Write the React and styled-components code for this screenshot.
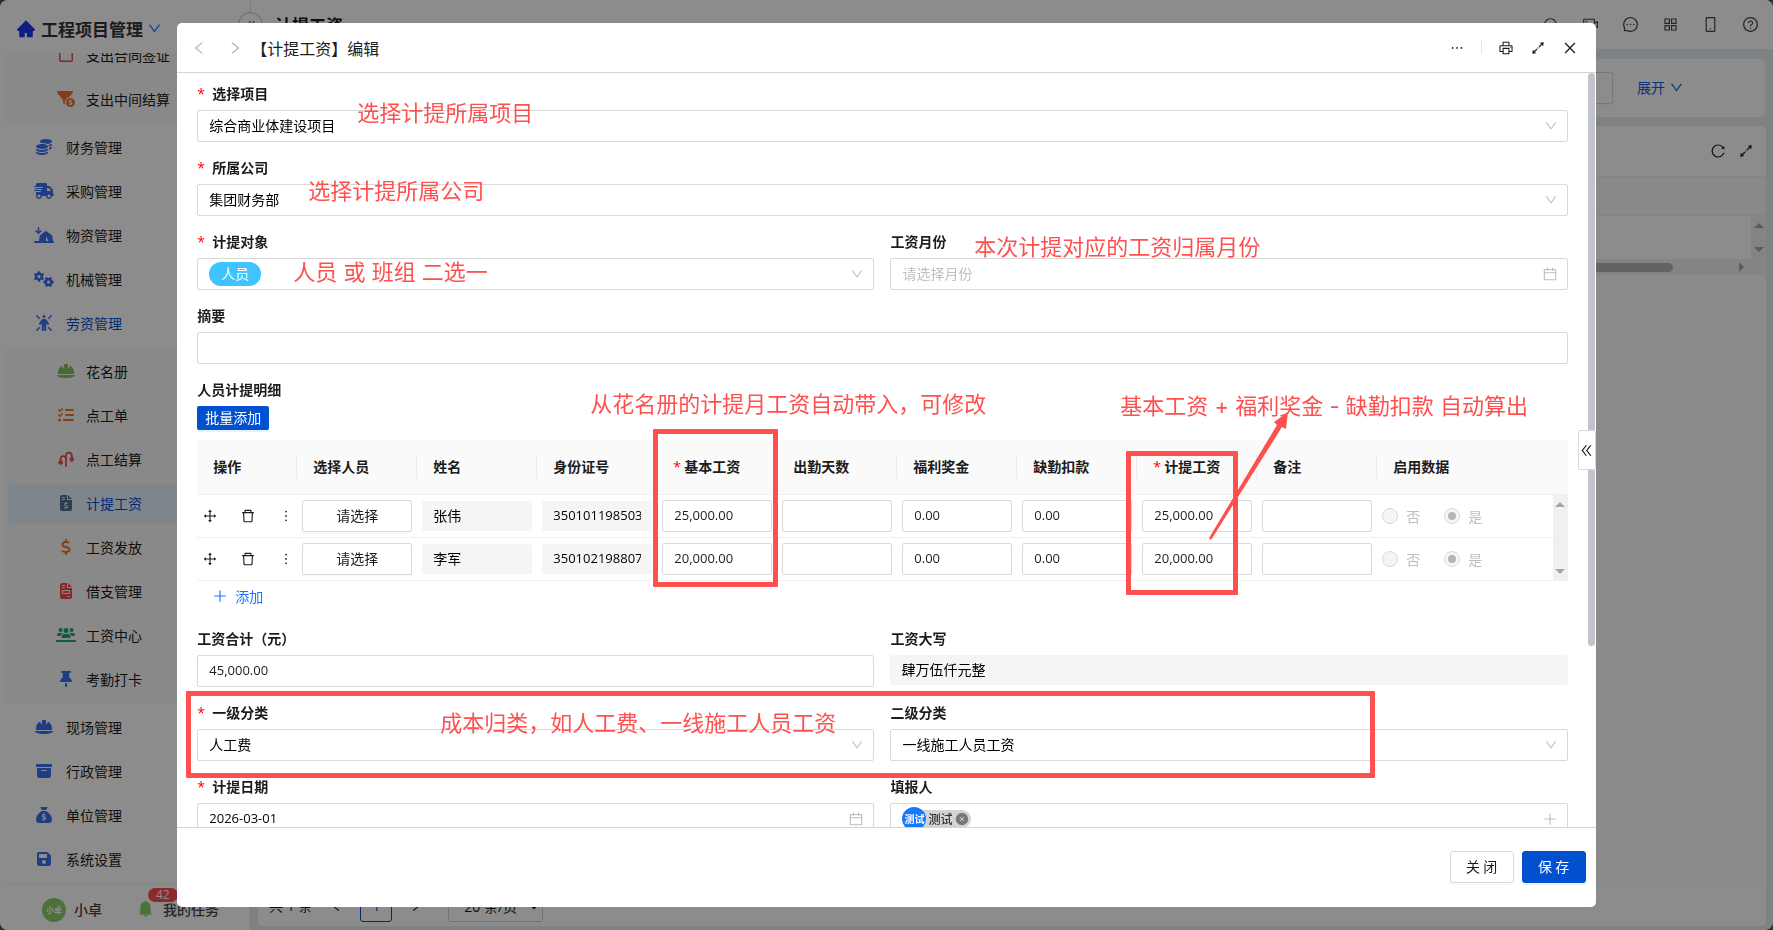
import React from "react";
import styled, { createGlobalStyle, css } from "styled-components";
import {
  AiFillHome, AiOutlineDown, AiOutlineLeft, AiOutlineRight, AiOutlineEllipsis, AiOutlinePrinter,
  AiOutlineClose, AiOutlineReload, AiOutlineCalendar, AiOutlinePlus, AiOutlineDelete, AiOutlineDrag,
  AiOutlineDoubleLeft, AiOutlineMobile, AiOutlineQuestionCircle, AiOutlineAppstore, AiOutlineMessage,
  AiOutlineMore, AiOutlineVideoCamera, AiOutlineSearch, AiOutlineCustomerService, AiFillCloseCircle, AiFillBell,
} from "react-icons/ai";
import {
  FaCoins, FaTruckFast, FaTentArrowDownToLine, FaGears, FaPersonRays, FaHelmetSafety, FaListCheck,
  FaFileInvoiceDollar, FaDollarSign, FaFileInvoice, FaUsersLine, FaThumbtack, FaBoxArchive,
  FaSackDollar, FaFloppyDisk, FaFilterCircleDollar, FaRegSquare,
} from "react-icons/fa6";

const fontStack = '"Noto Sans CJK SC", "Open Sans", sans-serif';
const latinStack = '"Open Sans", "Noto Sans CJK SC", sans-serif';
const mark = "#ff5050";

const GlobalStyle = createGlobalStyle`
  * { box-sizing: border-box; }
  body { margin: 0; background: #555; color: #1c1c1c; font: 14px/22px ${fontStack}; }
  button, input, select { font: inherit; color: inherit; margin: 0; }
  button { cursor: pointer; }
  svg { display: block; flex: none; }
`;

/* ---------- application shell ---------- */

const Shell = styled.div`
  display: grid;
  grid-template-columns: 251px minmax(0, 1fr);
  height: 100vh;
  overflow: hidden;
  border-radius: 8px;
  background: #e8edf2;
`;

const Sidebar = styled.aside`
  display: flex;
  flex-direction: column;
  min-height: 0;
  background: #fff;
  border-right: 1px solid #e2e2e2;
`;

const Brand = styled.div`
  display: flex;
  align-items: center;
  gap: 5px;
  height: 53px;
  padding: 4px 0 0 16px;
  font-size: 17px;
  font-weight: 700;
  color: #333;
  flex: none;
`;

const BrandSearch = styled.button`
  margin-left: 46px;
  padding: 0;
  border: 0;
  background: none;
  color: #1677ff;
`;

const Menu = styled.nav`
  flex: 1;
  min-height: 0;
  overflow: hidden;
  display: flex;
  flex-direction: column;
  justify-content: flex-end;
  gap: 4px;
  padding: 0 4px 4px;
`;

const SubMenu = styled.div`
  flex: none;
  display: flex;
  flex-direction: column;
  gap: 4px;
  padding: 4px;
  background: #fafafa;
`;

const MenuLink = styled.a`
  flex: none;
  display: flex;
  align-items: center;
  gap: ${(p) => (p.$sub ? 10 : 12)}px;
  height: 40px;
  padding: 0 0 2px ${(p) => (p.$sub ? 48 : 30)}px;
  border-radius: 4px;
  color: ${(p) => (p.$active ? "#0050d0" : "#1c1c1c")};
  background: ${(p) => (p.$selected ? "#e6f4ff" : "transparent")};
  text-decoration: none;
  white-space: nowrap;
`;

const IconSlot = styled.span`
  width: 20px;
  color: ${(p) => p.$color};
  svg { width: 20px; height: 16px; }
`;

const UserBar = styled.div`
  position: relative;
  flex: none;
  display: flex;
  align-items: center;
  height: 46px;
  margin-left: 4px;
  padding: 4px 0 0 38px;
  border-top: 1px solid #eee;
  color: #444;
  font-weight: 500;
`;

const Avatar = styled.span`
  display: grid;
  place-items: center;
  flex: none;
  width: 24px;
  height: 24px;
  border-radius: 50%;
  background: ${(p) => p.$color};
  color: #fff;
  font-size: ${(p) => p.$size}px;
  font-weight: 700;
  line-height: 1;
  white-space: nowrap;
`;

const UserName = styled.span`
  margin: 0 34px 0 8px;
  padding-bottom: 2px;
`;

const Tasks = styled.a`
  display: flex;
  align-items: center;
  gap: 8px;
  padding-bottom: 2px;
  color: inherit;
  text-decoration: none;
  svg { color: #87d068; }
`;

const Badge = styled.span`
  position: absolute;
  left: 144px;
  top: 3px;
  padding: 0 8px;
  border-radius: 8px;
  background: #ff4d4f;
  color: #fff;
  font: 12px/14px ${latinStack};
`;

const Main = styled.main`
  position: relative;
  display: flex;
  flex-direction: column;
  min-width: 0;
  min-height: 0;
`;

const CollapseButton = styled.button`
  position: absolute;
  left: -13px;
  top: 12px;
  display: grid;
  place-items: center;
  width: 25px;
  height: 25px;
  padding: 0;
  border: 1px solid #bbb;
  border-radius: 50%;
  background: #fff;
  color: #444;
`;

const TopBar = styled.header`
  flex: none;
  display: flex;
  align-items: center;
  justify-content: space-between;
  height: 49px;
  padding: 0 14px 0 24px;
  background: #fff;
`;

const PageTitle = styled.h1`
  margin: 0;
  font-size: 17px;
  line-height: 24px;
`;

const TopTools = styled.div`
  display: flex;
  gap: 23px;
  color: #444;
`;

const PlainButton = styled.button`
  display: grid;
  place-items: center;
  min-width: 16px;
  min-height: 16px;
  padding: 0;
  border: 0;
  background: none;
  color: inherit;
`;

const FilterCard = styled.section`
  flex: none;
  display: flex;
  align-items: center;
  justify-content: flex-end;
  gap: 24px;
  height: 58px;
  margin: 10px 8px 9px 7px;
  padding-right: 81px;
  border-radius: 4px;
  background: #fff;
`;

const ExpandLink = styled.a`
  display: flex;
  align-items: center;
  gap: 4px;
  padding-bottom: 2px;
  color: #0a60ee;
  text-decoration: none;
`;

const ListCard = styled.section`
  flex: 1;
  min-height: 0;
  display: flex;
  flex-direction: column;
  margin: 0 7px 4px;
  border-radius: 4px;
  background: #fff;
`;

const ListTools = styled.div`
  display: flex;
  align-items: center;
  justify-content: flex-end;
  gap: 12px;
  height: 50px;
  padding-right: 12px;
`;

const ListHead = styled.div`
  height: 40px;
  background: #fafafa;
  border-top: 1px solid #efefef;
  border-bottom: 1px solid #efefef;
`;

const ListBody = styled.div`
  display: flex;
  justify-content: flex-end;
  height: 43px;
`;

const ScrollRail = styled.div`
  display: flex;
  flex-direction: column;
  align-items: center;
  justify-content: space-between;
  width: 15px;
  height: 100%;
  padding: 7px 0;
  background: #f0f0f0;
`;

const Arrow = styled.i`
  width: 0;
  height: 0;
  border: 5px solid transparent;
  ${(p) => p.$dir === "up" && css`border-top-width: 0; border-bottom-color: #a6a6a6;`}
  ${(p) => p.$dir === "down" && css`border-bottom-width: 0; border-top-color: #a6a6a6;`}
  ${(p) => p.$dir === "right" && css`border-right-width: 0; border-left-color: #a6a6a6;`}
`;

const HorizontalRail = styled.div`
  display: flex;
  align-items: center;
  justify-content: flex-end;
  gap: 66px;
  height: 16px;
  padding-right: 22px;
  background: #f0f0f0;
`;

const HorizontalThumb = styled.div`
  width: 60%;
  height: 9px;
  border-radius: 5px;
  background: #b4b4b4;
`;

const ListFill = styled.div`
  flex: 1;
  background: #fdfdfd;
`;

const Pagination = styled.div`
  display: flex;
  align-items: center;
  gap: 8px;
  padding: 0 0 4px 11px;
  font-family: ${latinStack};
`;

const PageTotal = styled.span`
  margin-right: 8px;
`;

const PageNumber = styled.button`
  width: 32px;
  height: 32px;
  margin: 0 8px;
  border: 1px solid #0050d0;
  border-radius: 3px;
  background: #fff;
  color: #0050d0;
`;

const PageSize = styled.select`
  width: 95px;
  height: 32px;
  margin-left: 16px;
  padding-left: 11px;
  border: 1px solid #d0d0d0;
  border-radius: 3px;
  background: #fff;
`;

/* ---------- dialog ---------- */

const Mask = styled.div`
  position: fixed;
  inset: 0;
  display: grid;
  place-items: center;
  background: rgba(0, 0, 0, 0.45);
`;

const Dialog = styled.section`
  position: relative;
  display: flex;
  flex-direction: column;
  width: 80vw;
  height: 95vh;
  border-radius: 5px;
  background: #fff;
  overflow: hidden;
`;

const DialogHeader = styled.header`
  flex: none;
  display: flex;
  align-items: center;
  justify-content: space-between;
  height: 50px;
  padding: 0 18px 0 14px;
  border-bottom: 1px solid #d4d4d4;
`;

const HeaderGroup = styled.div`
  display: flex;
  align-items: center;
  gap: ${(p) => p.$gap}px;
`;

const DialogTitle = styled.h2`
  margin: 0 0 0 -12px;
  font-size: 16px;
  font-weight: 400;
  line-height: 24px;
`;

const StepButton = styled(PlainButton)`
  width: 16px;
  color: #b8b8b8;
`;

const Rule = styled.span`
  width: 1px;
  height: 13px;
  background: #e4e4e4;
`;

const DialogBody = styled.div`
  position: relative;
  flex: 1;
  min-height: 0;
  display: flex;
  overflow: hidden;
`;

const Form = styled.form`
  flex: 1;
  min-width: 0;
  display: flex;
  flex-direction: column;
  gap: 14px;
  padding: 9px 20px 0;
  overflow: hidden;
`;

const ScrollTrack = styled.div`
  flex: none;
  width: 8px;
`;

const ScrollThumb = styled.div`
  width: 7px;
  height: 76%;
  border-radius: 4px;
  background: #c1c4cb;
`;

const SideTab = styled.button`
  position: absolute;
  right: 0;
  top: 50%;
  transform: translateY(-50%);
  display: grid;
  place-items: center;
  width: 18px;
  height: 40px;
  padding: 0;
  border: 1px solid #d9d9d9;
  border-radius: 2px;
  background: #fff;
`;

const DialogFooter = styled.footer`
  flex: none;
  display: flex;
  align-items: flex-start;
  justify-content: flex-end;
  gap: 8px;
  height: 80px;
  padding: 23px 10px 0;
  border-top: 1px solid #d4d4d4;
`;

const Button = styled.button`
  width: 64px;
  height: 32px;
  padding: 0 0 2px;
  border: 1px solid ${(p) => (p.$primary ? "#0050d0" : "#d9d9d9")};
  border-radius: 3px;
  background: ${(p) => (p.$primary ? "#0050d0" : "#fff")};
  color: ${(p) => (p.$primary ? "#fff" : "#1c1c1c")};
  box-shadow: 0 2px 0 ${(p) => (p.$primary ? "#e6f4ff" : "#fafafa")};
`;

/* ---------- form fields ---------- */

const Columns = styled.div`
  flex: none;
  display: grid;
  grid-template-columns: repeat(2, minmax(0, 1fr));
  gap: 16px;
`;

const FieldWrap = styled.div`
  flex: none;
  display: flex;
  flex-direction: column;
  gap: 4px;
`;

const Label = styled.label`
  height: 24px;
  line-height: 22px;
  font-weight: 600;
`;

const Star = styled.span`
  display: inline-block;
  width: ${(p) => (p.$tight ? 11 : 15)}px;
  height: 22px;
  vertical-align: top;
  color: #f00;
  font: 400 14px/24px ${latinStack};
`;

const Box = styled.div`
  display: flex;
  align-items: center;
  height: 32px;
  padding: 0 9px 0 11px;
  border: 1px solid #d9d9d9;
  border-radius: 2px;
  background: #fff;
  color: #000;
  > svg { color: #bfbfbf; }
`;

const bareControl = css`
  flex: 1;
  min-width: 0;
  width: 100%;
  padding: 0 0 2px;
  border: 0;
  outline: 0;
  background: none;
  appearance: none;
`;

const BareInput = styled.input`
  ${bareControl}
  &::placeholder { color: #bfbfbf; }
`;

const BareSelect = styled.select`
  ${bareControl}
  opacity: 1;
`;

const PillSelect = styled.select`
  height: 24px;
  padding: 0 12px 2px;
  border: 0;
  border-radius: 12px;
  background: #40c4ff;
  color: #fff;
  appearance: none;
`;

const Spacer = styled.span`
  flex: 1;
`;

const numeric = css`
  font-family: ${latinStack};
  font-size: 13px;
`;

const TextInput = styled.input`
  display: block;
  width: 100%;
  height: 32px;
  padding: 0 11px 2px;
  border: 1px solid #d9d9d9;
  border-radius: 2px;
  background: #fff;
  color: #1c1c1c;
  outline: 0;
  ${(p) => p.$numeric && numeric}
  ${(p) => p.readOnly && css`
    height: 30px;
    padding: 0 10px 2px;
    border-color: #f5f5f5;
    background: #f5f5f5;
    color: #000;
  `}
`;

const DateInput = styled(BareInput)`
  ${numeric}
`;

const Person = styled.span`
  display: flex;
  align-items: center;
  height: 18px;
  padding-right: 2px;
  gap: 2px;
  border-radius: 9px;
  background: #d3d3d3;
  font-size: 12px;
  svg { color: #777; }
`;

/* ---------- detail table ---------- */

const BatchButton = styled.button`
  display: block;
  width: 72px;
  height: 24px;
  margin-bottom: 10px;
  padding: 0 0 2px;
  border: 0;
  border-radius: 2px;
  background: #0050d0;
  color: #fff;
  box-shadow: 0 2px 0 #e6f4ff;
`;

const Table = styled.table`
  width: 100%;
  table-layout: fixed;
  border-collapse: separate;
  border-spacing: 0;
`;

const Th = styled.th`
  position: relative;
  height: 55px;
  padding: 0 0 2px 16px;
  border-bottom: 1px solid #f0f0f0;
  background: #fafafa;
  font-weight: 600;
  text-align: left;
  white-space: nowrap;
  ${(p) => p.$split && css`
    &::after {
      content: "";
      position: absolute;
      right: 0;
      top: 15px;
      width: 1px;
      height: 24px;
      background: #ececec;
    }
  `}
`;

const Td = styled.td`
  height: 43px;
  padding: 0 5px;
  border-bottom: 1px solid #f0f0f0;
`;

const RailCell = styled.td`
  padding: 0;
  height: 86px;
`;

const RowTools = styled.div`
  display: flex;
  align-items: center;
  gap: 22px;
  color: #1c1c1c;
`;

const PickButton = styled.button`
  display: block;
  width: 100%;
  height: 32px;
  padding: 0 0 2px;
  border: 1px solid #d9d9d9;
  border-radius: 2px;
  background: #fff;
  box-shadow: 0 2px 0 #fafafa;
`;

const Radios = styled.div`
  display: flex;
  gap: 24px;
`;

const RadioLabel = styled.label`
  display: flex;
  align-items: center;
  gap: 8px;
  color: #bfbfbf;
`;

const Radio = styled.input`
  appearance: none;
  display: grid;
  place-items: center;
  width: 16px;
  height: 16px;
  border: 1px solid #d9d9d9;
  border-radius: 50%;
  background: #f5f5f5;
  &:checked::after {
    content: "";
    width: 8px;
    height: 8px;
    border-radius: 50%;
    background: #b5b5b5;
  }
`;

const AddRow = styled.button`
  display: flex;
  align-items: center;
  gap: 7px;
  height: 32px;
  padding: 0 15px 2px;
  border: 0;
  background: none;
  color: #1677ff;
`;

/* ---------- review notes drawn over the form ---------- */

const Notes = styled.div`
  position: absolute;
  inset: 0;
  pointer-events: none;
`;

const Note = styled.span`
  position: absolute;
  left: ${(p) => p.$x}px;
  top: ${(p) => p.$y}px;
  color: ${mark};
  font: 400 22px/32px Inter, "Noto Sans CJK SC", sans-serif;
  white-space: nowrap;
`;

const Frame = styled.span`
  position: absolute;
  left: ${(p) => p.$x}px;
  top: ${(p) => p.$y}px;
  width: ${(p) => p.$w}px;
  height: ${(p) => p.$h}px;
  border: 5px solid ${mark};
  border-radius: 1px;
`;

const NoteArrow = styled.svg`
  position: absolute;
  left: 1026px;
  top: 336px;
`;

/* ---------- parts ---------- */

const ExpandIcon = ({ size = 12 }) => (
  <svg width={size} height={size} viewBox="0 0 12 12" fill="none" stroke="currentColor">
    <path d="M2.500 9.500 5 7M5.700 6.300 6.300 5.700M7 5 9.500 2.500" strokeWidth="1.200" />
    <path d="M8.200 1 11.500.5 11 3.800ZM1 8.200 3.800 11 .5 11.500Z" fill="currentColor" strokeWidth=".4" />
  </svg>
);

const SettleIcon = () => (
  <svg viewBox="0 0 18 18" fill="none" stroke="currentColor" strokeWidth="2" strokeLinecap="round">
    <path d="M9 17V5a3.200 3.200 0 0 1 6.500 0v3" />
    <path d="M8.500 8a2.800 2.800 0 0 0-5.500 0v3" />
    <path d="M15.500 6.500 17.500 9.500 15.500 11.500 13.500 9.500ZM3 10 5 13 3 15 1 13Z" fill="currentColor" strokeWidth="1.500" />
  </svg>
);

const blue = "#3a6ff0";
const menu = [
  { children: [
    { text: "支出合同签证", icon: FaRegSquare, color: "#f5494d" },
    { text: "支出中间结算", icon: FaFilterCircleDollar, color: "#ee7331" },
  ] },
  { text: "财务管理", icon: FaCoins },
  { text: "采购管理", icon: FaTruckFast },
  { text: "物资管理", icon: FaTentArrowDownToLine },
  { text: "机械管理", icon: FaGears },
  { text: "劳资管理", icon: FaPersonRays, active: true },
  { children: [
    { text: "花名册", icon: FaHelmetSafety, color: "#87c068" },
    { text: "点工单", icon: FaListCheck, color: "#ee7331" },
    { text: "点工结算", icon: SettleIcon, color: "#ee4d50" },
    { text: "计提工资", icon: FaFileInvoiceDollar, color: "#56708f", active: true, selected: true },
    { text: "工资发放", icon: FaDollarSign, color: "#ee7331" },
    { text: "借支管理", icon: FaFileInvoice, color: "#ee4d50" },
    { text: "工资中心", icon: FaUsersLine, color: "#20a080" },
    { text: "考勤打卡", icon: FaThumbtack, color: blue },
  ] },
  { text: "现场管理", icon: FaHelmetSafety },
  { text: "行政管理", icon: FaBoxArchive },
  { text: "单位管理", icon: FaSackDollar },
  { text: "系统设置", icon: FaFloppyDisk },
];

function MenuItem({ item, sub }) {
  const Icon = item.icon;
  return (
    <MenuLink href="#" $sub={sub} $active={item.active} $selected={item.selected}>
      <IconSlot $color={item.color || blue}><Icon /></IconSlot>
      {item.text}
    </MenuLink>
  );
}

function Field({ id, label, required, children }) {
  return (
    <FieldWrap>
      <Label htmlFor={id}>{required && <Star>*</Star>}{label}</Label>
      {children}
    </FieldWrap>
  );
}

function SelectField({ id, label, required, value }) {
  return (
    <Field id={id} label={label} required={required}>
      <Box>
        <BareSelect id={id} defaultValue={value}><option>{value}</option></BareSelect>
        <AiOutlineDown size={14} />
      </Box>
    </Field>
  );
}

const headers = ["操作", "选择人员", "姓名", "身份证号", "*基本工资", "出勤天数", "福利奖金", "缺勤扣款", "*计提工资", "备注"];
const rows = [
  { name: "张伟", id: "350101198503", base: "25,000.00", total: "25,000.00" },
  { name: "李军", id: "350102198807", base: "20,000.00", total: "20,000.00" },
];

function DetailTable() {
  return (
    <Table>
      <colgroup>
        <col width="100" />
        {headers.slice(1).map((h) => <col key={h} width="120" />)}
        <col />
        <col width="15" />
      </colgroup>
      <thead>
        <tr>
          {headers.map((h) => (
            <Th key={h} $split>
              {h[0] === "*" ? <><Star $tight>*</Star>{h.slice(1)}</> : h}
            </Th>
          ))}
          <Th colSpan={2}>启用数据</Th>
        </tr>
      </thead>
      <tbody>
        {rows.map((r, i) => (
          <tr key={r.id}>
            <Td>
              <RowTools>
                <PlainButton type="button" aria-label="移动"><AiOutlineDrag size={16} /></PlainButton>
                <PlainButton type="button" aria-label="删除"><AiOutlineDelete size={16} /></PlainButton>
                <PlainButton type="button" aria-label="更多"><AiOutlineMore size={16} /></PlainButton>
              </RowTools>
            </Td>
            <Td><PickButton type="button">请选择</PickButton></Td>
            <Td><TextInput aria-label="姓名" readOnly value={r.name} /></Td>
            <Td><TextInput aria-label="身份证号" readOnly $numeric value={r.id} /></Td>
            <Td><TextInput aria-label="基本工资" $numeric defaultValue={r.base} /></Td>
            <Td><TextInput aria-label="出勤天数" $numeric /></Td>
            <Td><TextInput aria-label="福利奖金" $numeric defaultValue="0.00" /></Td>
            <Td><TextInput aria-label="缺勤扣款" $numeric defaultValue="0.00" /></Td>
            <Td><TextInput aria-label="计提工资" $numeric defaultValue={r.total} /></Td>
            <Td><TextInput aria-label="备注" /></Td>
            <Td>
              <Radios>
                <RadioLabel><Radio type="radio" name={`on${i}`} disabled />否</RadioLabel>
                <RadioLabel><Radio type="radio" name={`on${i}`} disabled defaultChecked />是</RadioLabel>
              </Radios>
            </Td>
            {i === 0 && (
              <RailCell rowSpan={2} aria-hidden="true">
                <ScrollRail><Arrow $dir="up" /><Arrow $dir="down" /></ScrollRail>
              </RailCell>
            )}
          </tr>
        ))}
      </tbody>
    </Table>
  );
}

function Background() {
  return (
    <Shell>
      <Sidebar>
        <Brand>
          <AiFillHome size={20} color="#1a35e8" />
          <HeaderGroup $gap={4}>工程项目管理<AiOutlineDown size={15} color="#1677ff" /></HeaderGroup>
          <BrandSearch aria-label="搜索"><AiOutlineSearch size={14} /></BrandSearch>
        </Brand>
        <Menu>
          {menu.map((m, i) =>
            m.children
              ? <SubMenu key={i}>{m.children.map((c) => <MenuItem key={c.text} item={c} sub />)}</SubMenu>
              : <MenuItem key={m.text} item={m} />
          )}
        </Menu>
        <UserBar>
          <Avatar $color="#87d068" $size={8}>小卓</Avatar>
          <UserName>小卓</UserName>
          <Tasks href="#"><AiFillBell size={19} />我的任务</Tasks>
          <Badge>42</Badge>
        </UserBar>
      </Sidebar>
      <Main>
        <TopBar>
          <PageTitle>计提工资</PageTitle>
          <TopTools>
            <PlainButton aria-label="客服"><AiOutlineCustomerService size={17} /></PlainButton>
            <PlainButton aria-label="视频"><AiOutlineVideoCamera size={17} /></PlainButton>
            <PlainButton aria-label="消息"><AiOutlineMessage size={17} /></PlainButton>
            <PlainButton aria-label="应用"><AiOutlineAppstore size={17} /></PlainButton>
            <PlainButton aria-label="手机"><AiOutlineMobile size={17} /></PlainButton>
            <PlainButton aria-label="帮助"><AiOutlineQuestionCircle size={17} /></PlainButton>
          </TopTools>
        </TopBar>
        <CollapseButton aria-label="收起"><AiOutlineDoubleLeft size={12} /></CollapseButton>
        <FilterCard>
          <Button>重 置</Button>
          <ExpandLink href="#">展开<AiOutlineDown size={15} /></ExpandLink>
        </FilterCard>
        <ListCard>
          <ListTools>
            <PlainButton aria-label="刷新"><AiOutlineReload size={16} /></PlainButton>
            <PlainButton aria-label="全屏"><ExpandIcon /></PlainButton>
          </ListTools>
          <ListHead />
          <ListBody><ScrollRail><Arrow $dir="up" /><Arrow $dir="down" /></ScrollRail></ListBody>
          <HorizontalRail><HorizontalThumb /><Arrow $dir="right" /></HorizontalRail>
          <ListFill />
          <Pagination>
            <PageTotal>共 1 条</PageTotal>
            <PlainButton aria-label="上一页"><AiOutlineLeft size={14} /></PlainButton>
            <PageNumber>1</PageNumber>
            <PlainButton aria-label="下一页"><AiOutlineRight size={14} /></PlainButton>
            <PageSize aria-label="每页条数"><option>20 条/页</option></PageSize>
          </Pagination>
        </ListCard>
      </Main>
    </Shell>
  );
}

export default function App() {
  return (
    <>
      <GlobalStyle />
      <Background />
      <Mask>
        <Dialog role="dialog" aria-labelledby="dialog-title">
          <DialogHeader>
            <HeaderGroup $gap={20}>
              <StepButton aria-label="上一条"><AiOutlineLeft size={16} /></StepButton>
              <StepButton aria-label="下一条"><AiOutlineRight size={16} /></StepButton>
              <DialogTitle id="dialog-title">【计提工资】编辑</DialogTitle>
            </HeaderGroup>
            <HeaderGroup $gap={16}>
              <PlainButton aria-label="更多"><AiOutlineEllipsis size={16} /></PlainButton>
              <Rule />
              <PlainButton aria-label="打印"><AiOutlinePrinter size={16} /></PlainButton>
              <PlainButton aria-label="全屏"><ExpandIcon /></PlainButton>
              <PlainButton aria-label="关闭"><AiOutlineClose size={16} /></PlainButton>
            </HeaderGroup>
          </DialogHeader>
          <DialogBody>
            <Form>
              <SelectField id="project" label="选择项目" required value="综合商业体建设项目" />
              <SelectField id="company" label="所属公司" required value="集团财务部" />
              <Columns>
                <Field id="target" label="计提对象" required>
                  <Box>
                    <PillSelect id="target"><option>人员</option></PillSelect>
                    <Spacer />
                    <AiOutlineDown size={14} />
                  </Box>
                </Field>
                <Field id="month" label="工资月份">
                  <Box><BareInput id="month" placeholder="请选择月份" /><AiOutlineCalendar size={16} /></Box>
                </Field>
              </Columns>
              <Field id="summary" label="摘要"><TextInput id="summary" /></Field>
              <FieldWrap>
                <Label as="div">人员计提明细</Label>
                <div>
                  <BatchButton type="button">批量添加</BatchButton>
                  <DetailTable />
                  <AddRow type="button"><AiOutlinePlus size={16} />添加</AddRow>
                </div>
              </FieldWrap>
              <Columns>
                <Field id="sum" label="工资合计（元）"><TextInput id="sum" $numeric defaultValue="45,000.00" /></Field>
                <Field id="words" label="工资大写"><TextInput id="words" readOnly value="肆万伍仟元整" /></Field>
              </Columns>
              <Columns>
                <SelectField id="cat1" label="一级分类" required value="人工费" />
                <SelectField id="cat2" label="二级分类" value="一线施工人员工资" />
              </Columns>
              <Columns>
                <Field id="date" label="计提日期" required>
                  <Box><DateInput id="date" defaultValue="2026-03-01" /><AiOutlineCalendar size={16} /></Box>
                </Field>
                <Field label="填报人">
                  <Box>
                    <Person><Avatar $color="#1677ff" $size={10}>测试</Avatar>测试<AiFillCloseCircle size={14} /></Person>
                    <Spacer />
                    <AiOutlinePlus size={16} />
                  </Box>
                </Field>
              </Columns>
            </Form>
            <ScrollTrack><ScrollThumb /></ScrollTrack>
            <SideTab aria-label="展开侧栏"><AiOutlineDoubleLeft size={15} /></SideTab>
            <Notes>
              <Note $x={180} $y={24}>选择计提所属项目</Note>
              <Note $x={131} $y={102}>选择计提所属公司</Note>
              <Note $x={116} $y={183}>人员 或 班组 二选一</Note>
              <Note $x={797} $y={158}>本次计提对应的工资归属月份</Note>
              <Note $x={413} $y={315}>从花名册的计提月工资自动带入，可修改</Note>
              <Note $x={943} $y={317}>基本工资 + 福利奖金 - 缺勤扣款 自动算出</Note>
              <Note $x={263} $y={634}>成本归类，如人工费、一线施工人员工资</Note>
              <Frame $x={476} $y={356} $w={125} $h={158} />
              <Frame $x={949} $y={378} $w={112} $h={144} />
              <Frame $x={9} $y={618} $w={1189} $h={87} />
              <NoteArrow width="90" height="136" viewBox="0 0 90 136" fill={mark}>
                <path d="M6 129 74 16 71 13 85 3 83 20 79 18 8 131Z" />
              </NoteArrow>
            </Notes>
          </DialogBody>
          <DialogFooter>
            <Button type="button">关 闭</Button>
            <Button type="button" $primary>保 存</Button>
          </DialogFooter>
        </Dialog>
      </Mask>
    </>
  );
}
